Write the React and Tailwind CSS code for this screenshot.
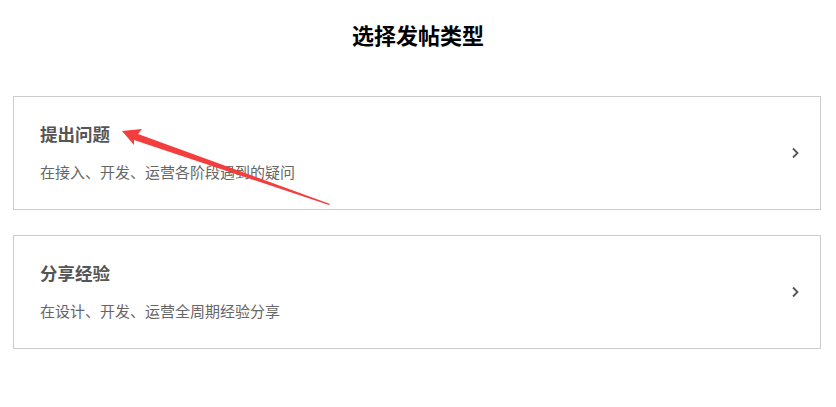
export default function App() {
  const cards = [
    { title: "提出问题", desc: "在接入、开发、运营各阶段遇到的疑问" },
    { title: "分享经验", desc: "在设计、开发、运营全周期经验分享" },
  ];
  return (
    <div
      className="relative w-[836px] h-[407px] bg-white overflow-hidden"
      style={{ fontFamily: '"Noto Sans CJK SC", "Noto Sans", sans-serif' }}
    >
      <h1 className="pt-[19px] h-[96px] text-center text-[22px] leading-[30px] font-bold text-black">
        选择发帖类型
      </h1>
      <div className="flex flex-col gap-[25px] ml-[13px] w-[808px]">
        {cards.map((c) => (
          <div
            key={c.title}
            className="flex items-center justify-between h-[114px] border border-[#cccccc] pl-[26px] pr-[20px]"
          >
            <div className="flex flex-col gap-[16px] pb-[2px]">
              <div className="text-[17.5px] leading-[24px] font-bold text-[#555555]">{c.title}</div>
              <div className="text-[15px] leading-[20px] text-[#666666]">{c.desc}</div>
            </div>
            <svg width="10" height="12" viewBox="0 0 10 12">
              <path d="M3 1.5 L7.5 6 L3 10.5" fill="none" stroke="#555555" strokeWidth="1.8" />
            </svg>
          </div>
        ))}
      </div>
      <svg className="absolute left-0 top-0 pointer-events-none" width="836" height="407">
        <polygon
          points="122,131 142,129 138,134 330,204 329,205 134,140 134,145"
          fill="#f43d3d"
        />
      </svg>
    </div>
  );
}
